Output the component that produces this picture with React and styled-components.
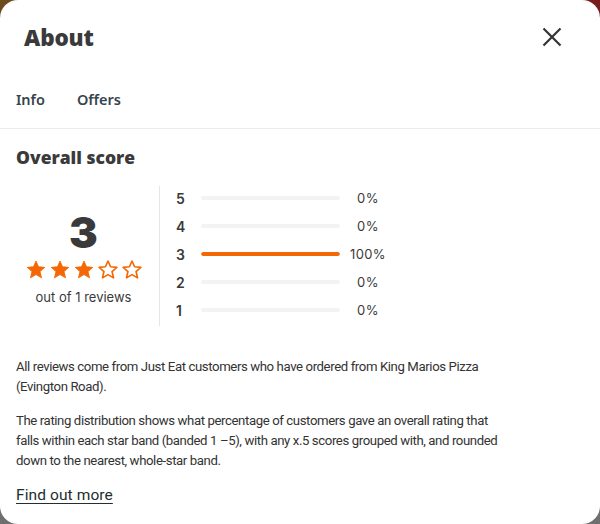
import React from "react";
import styled, { createGlobalStyle } from "styled-components";

const Global = createGlobalStyle`
  html, body { margin: 0; padding: 0; }
  body {
    width: 600px;
    height: 524px;
    overflow: hidden;
    background:
      linear-gradient(to bottom, transparent 50%, #6f6f6f 50%),
      linear-gradient(to right, #6d4a1c, #7a1c1c);
    font-family: "Roboto", "Liberation Sans", sans-serif;
  }
`;

const Modal = styled.div`
  width: 600px;
  height: 524px;
  background: #fff;
  border-radius: 18px;
  box-sizing: border-box;
  color: #242e30;
  display: flex;
  flex-direction: column;
`;

const Header = styled.div`
  display: flex;
  align-items: center;
  justify-content: space-between;
  padding: 19px 36px 0 24px;
  height: 36px;
`;

const Title = styled.h1`
  margin: 0;
  font-family: "Open Sans", sans-serif;
  font-weight: 800;
  font-size: 22.5px;
  letter-spacing: -0.2px;
  color: #3a3a3a;
`;

const CloseBtn = styled.button`
  border: none;
  background: none;
  padding: 0;
  width: 24px;
  height: 24px;
  display: flex;
  align-items: center;
  justify-content: center;
  cursor: pointer;
`;

const Tabs = styled.div`
  display: flex;
  gap: 32px;
  padding: 0 16px;
  height: 73px;
  align-items: center;
  border-bottom: 1px solid #ebebeb;
`;

const Tab = styled.div`
  font-family: "Noto Sans", sans-serif;
  font-size: 14.5px;
  font-weight: 600;
  color: #36444d;
  padding-top: 14px;
`;

const Body = styled.div`
  padding: 16px 16px 0 16px;
`;

const SectionTitle = styled.h2`
  margin: 0;
  font-family: "Open Sans", sans-serif;
  font-weight: 800;
  font-size: 17.5px;
  line-height: 24px;
  color: #3a3a3a;
`;

const ScoreRow = styled.div`
  display: flex;
  margin-top: 17px;
`;

const ScoreBox = styled.div`
  width: 144px;
  padding-right: 8px;
  padding-top: 2px;
  display: flex;
  flex-direction: column;
  align-items: center;
  justify-content: center;
  border-right: 1px solid #e6e6e6;
  height: 140px;
  box-sizing: border-box;
`;

const BigScore = styled.div`
  font-family: "Inter", sans-serif;
  font-weight: 900;
  font-size: 43px;
  line-height: 44px;
  color: #3a3a3a;
`;

const Stars = styled.div`
  display: flex;
  gap: 4px;
  margin-top: 6px;
`;

const Reviews = styled.div`
  margin-top: 10px;
  font-family: "Inter", sans-serif;
  font-size: 13px;
  color: #3a3a3a;
`;

const Dist = styled.div`
  display: flex;
  flex-direction: column;
  padding-left: 16px;
  margin-top: -2px;
`;

const DistRow = styled.div`
  display: flex;
  align-items: center;
  height: 28px;
`;

const DistLabel = styled.div`
  width: 25px;
  font-family: "Inter", sans-serif;
  font-weight: 600;
  font-size: 14px;
  color: #3a3a3a;
`;

const Track = styled.div`
  width: 139px;
  height: 4px;
  border-radius: 2px;
  background: #f5f3f1;
  overflow: hidden;
`;

const Fill = styled.div`
  height: 100%;
  background: #f36805;
  border-radius: 2px;
`;

const Pct = styled.div`
  width: 56px;
  text-align: center;
  font-family: "Inter", sans-serif;
  font-weight: 400;
  font-size: 13px;
  color: #3a3a3a;
  letter-spacing: 0.4px;
`;

const Para = styled.p`
  margin: 0;
  max-width: 488px;
  font-size: 13.2px;
  letter-spacing: -0.4px;
  line-height: 20px;
  color: #333;
`;

const Paras = styled.div`
  display: flex;
  flex-direction: column;
  gap: 14px;
  margin-top: 31px;
`;

const Link = styled.a`
  display: inline-block;
  margin-top: 15px;
  font-size: 15.5px;
  letter-spacing: 0.1px;
  color: #242e30;
  text-decoration: underline;
  text-underline-offset: 3px;
`;

const StarIcon = ({ filled }) => (
  <svg width="20" height="19" viewBox="0 0 24 23">
    <path
      d="M12 1.2l3.1 7 7.6.7-5.8 5.1 1.8 7.6L12 17.7l-6.7 3.9 1.8-7.6-5.8-5.1 7.6-.7z"
      fill={filled ? "#f36805" : "none"}
      stroke="#f36805"
      strokeWidth={filled ? 1 : 2}
      strokeLinejoin="round"
    />
  </svg>
);

const rows = [
  { n: 5, p: 0 },
  { n: 4, p: 0 },
  { n: 3, p: 100 },
  { n: 2, p: 0 },
  { n: 1, p: 0 },
];

export default function App() {
  return (
    <>
      <Global />
      <Modal>
        <Header>
          <Title>About</Title>
          <CloseBtn aria-label="Close">
            <svg width="20" height="20" viewBox="0 0 20 20">
              <path d="M1.5 1.5L18.5 18.5M18.5 1.5L1.5 18.5" stroke="#333" strokeWidth="2.2" />
            </svg>
          </CloseBtn>
        </Header>
        <Tabs>
          <Tab>Info</Tab>
          <Tab>Offers</Tab>
        </Tabs>
        <Body>
          <SectionTitle>Overall score</SectionTitle>
          <ScoreRow>
            <ScoreBox>
              <BigScore>3</BigScore>
              <Stars>
                {[1, 2, 3, 4, 5].map((i) => (
                  <StarIcon key={i} filled={i <= 3} />
                ))}
              </Stars>
              <Reviews>out of 1 reviews</Reviews>
            </ScoreBox>
            <Dist>
              {rows.map((r) => (
                <DistRow key={r.n}>
                  <DistLabel>{r.n}</DistLabel>
                  <Track>
                    <Fill style={{ width: `${r.p}%` }} />
                  </Track>
                  <Pct>{r.p}%</Pct>
                </DistRow>
              ))}
            </Dist>
          </ScoreRow>
          <Paras>
            <Para>
              All reviews come from Just Eat customers who have ordered from King Marios Pizza
              (Evington Road).
            </Para>
            <Para>
              The rating distribution shows what percentage of customers gave an overall rating that
              falls within each star band (banded 1 –5), with any x.5 scores grouped with, and rounded
              down to the nearest, whole-star band.
            </Para>
          </Paras>
          <Link href="#">Find out more</Link>
        </Body>
      </Modal>
    </>
  );
}
